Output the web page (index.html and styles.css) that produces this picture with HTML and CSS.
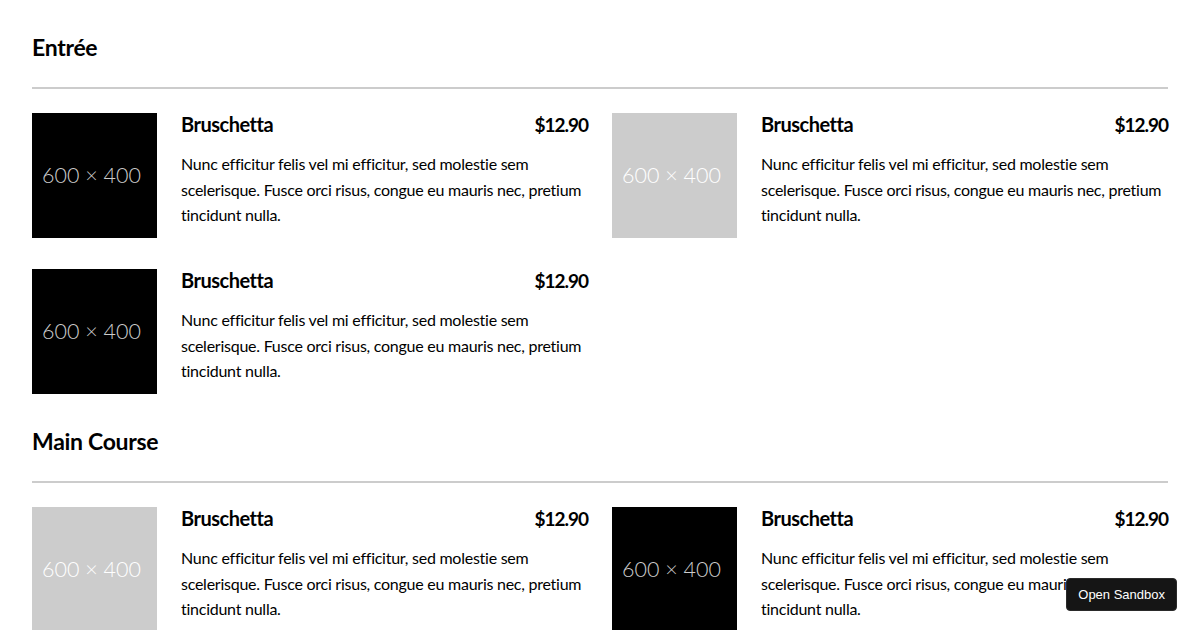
FILE: index.html
```html
<!DOCTYPE html>
<html lang="en">
<head>
<meta charset="utf-8">
<title>Menu</title>
<link rel="stylesheet" href="styles.css">
</head>
<body>
<main class="menu">
  <section class="course">
    <h2 class="course-title">Entrée</h2>
    <div class="items">
      <article class="item">
        <div class="thumb thumb-dark">600 × 400</div>
        <div class="info">
          <div class="info-head"><h3 class="name">Bruschetta</h3><span class="price">$12.90</span></div>
          <p class="desc">Nunc efficitur felis vel mi efficitur, sed molestie sem scelerisque. Fusce orci risus, congue eu mauris nec, pretium tincidunt nulla.</p>
        </div>
      </article>
      <article class="item">
        <div class="thumb thumb-light">600 × 400</div>
        <div class="info">
          <div class="info-head"><h3 class="name">Bruschetta</h3><span class="price">$12.90</span></div>
          <p class="desc">Nunc efficitur felis vel mi efficitur, sed molestie sem scelerisque. Fusce orci risus, congue eu mauris nec, pretium tincidunt nulla.</p>
        </div>
      </article>
      <article class="item">
        <div class="thumb thumb-dark">600 × 400</div>
        <div class="info">
          <div class="info-head"><h3 class="name">Bruschetta</h3><span class="price">$12.90</span></div>
          <p class="desc">Nunc efficitur felis vel mi efficitur, sed molestie sem scelerisque. Fusce orci risus, congue eu mauris nec, pretium tincidunt nulla.</p>
        </div>
      </article>
    </div>
  </section>
  <section class="course">
    <h2 class="course-title">Main Course</h2>
    <div class="items">
      <article class="item">
        <div class="thumb thumb-light">600 × 400</div>
        <div class="info">
          <div class="info-head"><h3 class="name">Bruschetta</h3><span class="price">$12.90</span></div>
          <p class="desc">Nunc efficitur felis vel mi efficitur, sed molestie sem scelerisque. Fusce orci risus, congue eu mauris nec, pretium tincidunt nulla.</p>
        </div>
      </article>
      <article class="item">
        <div class="thumb thumb-dark">600 × 400</div>
        <div class="info">
          <div class="info-head"><h3 class="name">Bruschetta</h3><span class="price">$12.90</span></div>
          <p class="desc">Nunc efficitur felis vel mi efficitur, sed molestie sem scelerisque. Fusce orci risus, congue eu mauris nec, pretium tincidunt nulla.</p>
        </div>
      </article>
    </div>
  </section>
</main>
<a class="sandbox-btn" href="#">Open Sandbox</a>
</body>
</html>
```

FILE: styles.css
```css
html, body {
  margin: 0;
  padding: 0;
  background: #fff;
}
body {
  font-family: Lato, "Open Sans", sans-serif;
  color: #000;
  font-size: 16px;
}
.menu {
  padding: 0 32px;
}
.course {
  padding-top: 32px;
}
.course-title {
  margin: 0 0 24px;
  font-size: 23px;
  line-height: 30px;
  font-weight: 700;
  letter-spacing: -0.3px;
  padding-bottom: 25px;
  border-bottom: 2px solid #ccc;
}
.items {
  display: grid;
  grid-template-columns: 1fr 1fr;
  column-gap: 24px;
  row-gap: 31px;
}
.item {
  display: flex;
  gap: 24px;
  align-items: flex-start;
}
.thumb {
  flex: 0 0 125px;
  width: 125px;
  height: 125px;
  box-sizing: border-box;
  padding: 0 6px 2px 0;
  display: flex;
  align-items: center;
  justify-content: center;
  font-family: Lato, sans-serif;
  font-weight: 300;
  font-size: 21.5px;
}
.thumb-dark {
  background: #000;
  color: #ccc;
}
.thumb-light {
  background: #ccc;
  color: #fff;
}
.info {
  flex: 1;
  min-width: 0;
}
.info-head {
  display: flex;
  justify-content: space-between;
  align-items: baseline;
}
.name, .price {
  margin: 0;
  font-size: 20px;
  line-height: 22px;
  font-weight: 700;
}
.name {
  letter-spacing: -0.5px;
}
.price {
  font-size: 19px;
  letter-spacing: -1px;
}
.desc {
  margin: 15px 0 0;
  line-height: 25.6px;
  letter-spacing: -0.25px;
}
.sandbox-btn {
  position: fixed;
  right: 23px;
  bottom: 19px;
  background: #151515;
  color: #fff;
  font-family: "Liberation Sans", Arial, sans-serif;
  font-size: 13px;
  line-height: 15px;
  padding: 8px 11px;
  border-radius: 4px;
  text-decoration: none;
  border: 1px solid #2a2a2a;
}
```
